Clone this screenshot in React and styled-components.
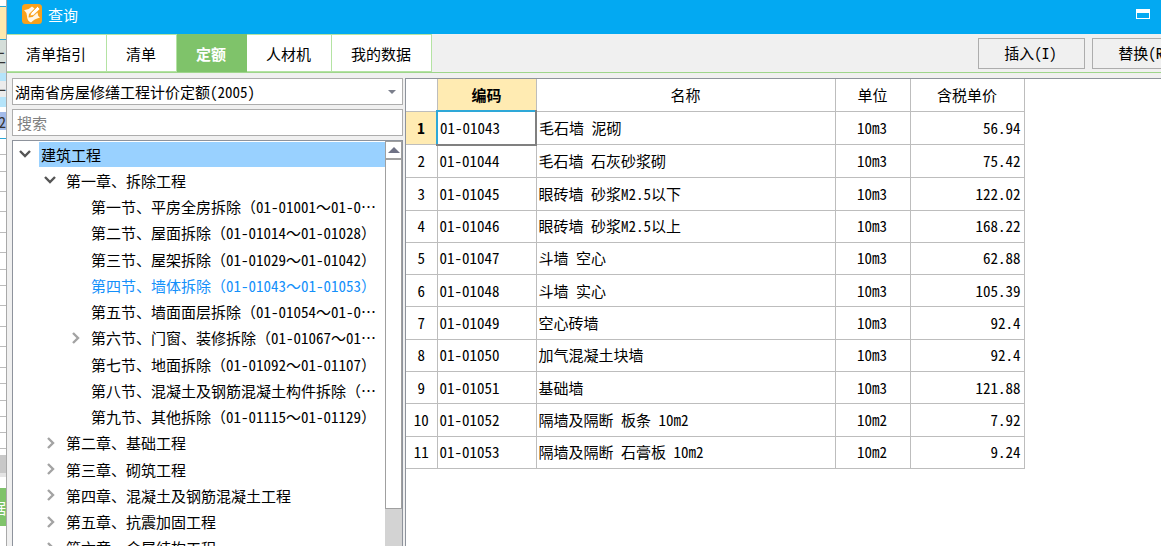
import React, { useState } from 'react';
import styled, { createGlobalStyle, css } from 'styled-components';

const TABS = ['清单指引', '清单', '定额', '人材机', '我的数据'];

const TREE = [
  { level: 0, label: '建筑工程', state: 'open' },
  { level: 1, label: '第一章、拆除工程', state: 'open' },
  { level: 2, label: '第一节、平房全房拆除（01-01001～01-01013）' },
  { level: 2, label: '第二节、屋面拆除（01-01014～01-01028）' },
  { level: 2, label: '第三节、屋架拆除（01-01029～01-01042）' },
  { level: 2, label: '第四节、墙体拆除（01-01043～01-01053）' },
  { level: 2, label: '第五节、墙面面层拆除（01-01054～01-01066）' },
  {
    level: 2,
    label: '第六节、门窗、装修拆除（01-01067～01-01091）',
    state: 'closed',
  },
  { level: 2, label: '第七节、地面拆除（01-01092～01-01107）' },
  {
    level: 2,
    label: '第八节、混凝土及钢筋混凝土构件拆除（01-01108～01-01114）',
  },
  { level: 2, label: '第九节、其他拆除（01-01115～01-01129）' },
  { level: 1, label: '第二章、基础工程', state: 'closed' },
  { level: 1, label: '第三章、砌筑工程', state: 'closed' },
  { level: 1, label: '第四章、混凝土及钢筋混凝土工程', state: 'closed' },
  { level: 1, label: '第五章、抗震加固工程', state: 'closed' },
  { level: 1, label: '第六章、金属结构工程', state: 'closed' },
];

const ITEMS = [
  ['01-01043', '毛石墙 泥砌', '10m3', '56.94'],
  ['01-01044', '毛石墙 石灰砂浆砌', '10m3', '75.42'],
  ['01-01045', '眼砖墙 砂浆M2.5以下', '10m3', '122.02'],
  ['01-01046', '眼砖墙 砂浆M2.5以上', '10m3', '168.22'],
  ['01-01047', '斗墙 空心', '10m3', '62.88'],
  ['01-01048', '斗墙 实心', '10m3', '105.39'],
  ['01-01049', '空心砖墙', '10m3', '92.4'],
  ['01-01050', '加气混凝土块墙', '10m3', '92.4'],
  ['01-01051', '基础墙', '10m3', '121.88'],
  ['01-01052', '隔墙及隔断 板条 10m2', '10m2', '7.92'],
  ['01-01053', '隔墙及隔断 石膏板 10m2', '10m2', '9.24'],
];

// strips of the main window that stay visible behind the dialog
const BACK_STRIPS = [
  { height: 7, color: '#ffffff', line: '#2aa7d8' },
  { height: 33, color: '#ffe9ae', line: '#2aa7d8' },
  { height: 33, color: '#d5ded9', text: '二' },
  { height: 8, color: '#b5e4fa' },
  { height: 16, color: '#ececec', text: '一' },
  { height: 10, color: '#b5e4fa' },
  { height: 5, color: '#ffffff' },
  { height: 18, color: '#a3bbea', text: '2' },
  { height: 9, color: '#ffffff', line: '#2aa7d8' },
  ...[16, 17, 20, 20, 21, 20, 17, 16, 20, 21, 20, 21, 16, 17, 16, 16, 16].map(
    (height) => ({ height, color: '#ffffff', line: '#bcbcbc' }),
  ),
  { height: 6, color: '#ffffff' },
  { height: 18, color: '#c8c8c8' },
  { height: 4, color: '#e4e4e4' },
  { height: 11, color: '#ffffff' },
  { height: 38, color: '#7fc36a', text: '据', textColor: '#ffffff' },
];

function Chevron({ open }) {
  return (
    <svg width="12" height="12" viewBox="0 0 12 12" fill="none">
      {open ? (
        <path d="M1 3 L6 8 L11 3" stroke="#555" strokeWidth="2.4" />
      ) : (
        <path d="M4 1 L9 6 L4 11" stroke="#a3a3a3" strokeWidth="2.4" />
      )}
    </svg>
  );
}

function Logo() {
  return (
    <svg width="20" height="20" viewBox="0 0 20 20">
      <rect width="20" height="20" rx="3.5" fill="#f9a11b" />
      <path
        d="M2 6 Q6 6.500 10 2.500 L12.500 4.500 L7 10 L6.500 13.500 L10.500 13 L15.500 8.500 Q15.500 12 18 13.500 Q12 15 9 18.500 Q5 17 5 12 Q4.500 8 2 6 Z"
        fill="#fff6e6"
      />
      <path
        d="M8 12 L9 9 L15.500 2.500 L18 5 L11.500 11.200 Z"
        fill="#ffffff"
        stroke="#f9a11b"
        strokeWidth="0.7"
      />
    </svg>
  );
}

// brackets and range marks keep the full character width
function NodeText({ text }) {
  return text
    .split(/([（～）])/)
    .map((part, i) => (i % 2 ? <Wide key={i}>{part}</Wide> : part));
}

export default function App() {
  const [tab, setTab] = useState('定额');
  const [section, setSection] = useState(5);
  const [selected, setSelected] = useState(0);

  return (
    <Screen lang="zh-CN">
      <GlobalStyle />
      <Backdrop aria-hidden="true">
        {BACK_STRIPS.map((strip, i) => (
          <Strip
            key={i}
            $height={strip.height}
            $color={strip.color}
            $line={strip.line}
            $textColor={strip.textColor}
          >
            {strip.text}
          </Strip>
        ))}
      </Backdrop>
      <Dialog>
        <TitleBar>
          <Logo />
          <Title>查询</Title>
          <WindowButton aria-label="最大化">
            <svg width="14" height="10" viewBox="0 0 14 10">
              <path
                d="M0 0 H14 V10 H0 Z M1 4 V9 H13 V4 Z"
                fill="#ffffff"
                fillRule="evenodd"
              />
            </svg>
          </WindowButton>
        </TitleBar>
        <Toolbar>
          {TABS.map((name) => (
            <Tab key={name} $active={name === tab} onClick={() => setTab(name)}>
              {name}
            </Tab>
          ))}
          <Actions>
            <ActionButton>插入(I)</ActionButton>
            <ActionButton>替换(R)</ActionButton>
          </Actions>
        </Toolbar>
        <Content>
          <SidePanel>
            <SelectBox>
              <Select aria-label="定额库">
                <option>湖南省房屋修缮工程计价定额(2005)</option>
              </Select>
              <svg width="8" height="4" viewBox="0 0 8 4">
                <path d="M0 0 H8 L4 4 Z" fill="#7b7f8c" />
              </svg>
            </SelectBox>
            <Search aria-label="搜索" placeholder="搜索" />
            <TreeBox>
              <Tree>
                {TREE.map((node, i) => (
                  <TreeRow key={node.label} $level={node.level}>
                    <Toggle>
                      {node.state && <Chevron open={node.state === 'open'} />}
                    </Toggle>
                    <NodeLabel
                      $root={node.level === 0}
                      $current={i === section}
                      onClick={() => setSection(i)}
                    >
                      <NodeText text={node.label} />
                    </NodeLabel>
                  </TreeRow>
                ))}
              </Tree>
              <ScrollTrack>
                <ScrollButton aria-label="向上滚动">
                  <svg width="12" height="6" viewBox="0 0 12 6">
                    <path d="M0 6 L6 0 L12 6 Z" fill="#6f7285" />
                  </svg>
                </ScrollButton>
                <ScrollThumb />
              </ScrollTrack>
            </TreeBox>
          </SidePanel>
          <TablePanel>
            <Table>
              <colgroup>
                <Col $width={31} />
                <Col $width={99} />
                <Col $width={299} />
                <Col $width={75} />
                <Col $width={114} />
              </colgroup>
              <thead>
                <HeadRow>
                  <HeadCell aria-label="序号" />
                  <HeadCell scope="col" $active>
                    编码
                  </HeadCell>
                  <HeadCell scope="col">名称</HeadCell>
                  <HeadCell scope="col">单位</HeadCell>
                  <HeadCell scope="col">含税单价</HeadCell>
                </HeadRow>
              </thead>
              <tbody>
                {ITEMS.map(([code, name, unit, price], i) => (
                  <tr key={code} onClick={() => setSelected(i)}>
                    <HeadCell scope="row" $active={i === selected}>
                      {i + 1}
                    </HeadCell>
                    <Cell $selected={i === selected}>{code}</Cell>
                    <Cell>{name}</Cell>
                    <Cell $align="center">{unit}</Cell>
                    <Cell $align="right">{price}</Cell>
                  </tr>
                ))}
              </tbody>
            </Table>
          </TablePanel>
        </Content>
      </Dialog>
    </Screen>
  );
}

const GlobalStyle = createGlobalStyle`
  * {
    box-sizing: border-box;
  }

  body {
    margin: 0;
    background-color: #ffffff;
  }

  body, button, input, select {
    font-family: 'Noto Sans CJK SC', 'Liberation Sans', sans-serif;
    font-size: 15px;
    font-feature-settings: 'hwid';
    color: #000000;
  }
`;

const Screen = styled.div`
  display: flex;
  height: 100vh;
  overflow: hidden;
`;

const Backdrop = styled.div`
  flex: none;
  width: 7px;
  overflow: hidden;
  border-right: 1px solid #a9a9a9;
`;

const Strip = styled.div`
  display: flex;
  align-items: center;
  justify-content: flex-end;
  height: ${({ $height }) => $height}px;
  overflow: hidden;
  background-color: ${({ $color }) => $color};
  border-bottom: ${({ $line }) => ($line ? `1px solid ${$line}` : 'none')};
  color: ${({ $textColor }) => $textColor || '#333333'};
`;

const Dialog = styled.main`
  display: flex;
  flex: 1;
  flex-direction: column;
  min-width: 0;
  background-color: #f0f0f0;
`;

const TitleBar = styled.header`
  display: flex;
  flex: none;
  align-items: center;
  height: 34px;
  padding: 0 11px 6px 15px;
  background-color: #03a9f2;
`;

const Title = styled.h1`
  margin: 0 auto 0 6px;
  font-size: 15px;
  font-weight: normal;
  color: #ffffff;
`;

const WindowButton = styled.button`
  display: flex;
  padding: 0;
  border: none;
  background: none;
`;

const Toolbar = styled.nav`
  display: flex;
  flex: none;
  height: 39px;
  overflow: hidden;
  border-bottom: 1px solid #9ed58b;
`;

const Tab = styled.button`
  padding: 0 20px 0 19px;
  border: 1px solid #b4e3a3;
  border-left: none;
  background-color: #ffffff;

  ${({ $active }) =>
    $active &&
    css`
      border-color: #7fc36a;
      background-color: #7fc36a;
      font-weight: bold;
      color: #ffffff;
    `}
`;

const Actions = styled.div`
  display: flex;
  gap: 7px;
  margin: 4px -38px 3px auto;
`;

const ActionButton = styled.button`
  width: 107px;
  padding: 0 4px 2px 2px;
  border: 1px solid #adadad;
  background-color: #f0f0f0;
`;

const Content = styled.div`
  display: flex;
  flex: 1;
  gap: 2px;
  min-height: 0;
  padding: 5px 0 0 5px;
`;

const SidePanel = styled.aside`
  display: flex;
  flex: none;
  flex-direction: column;
  gap: 4px;
  width: 391px;
`;

const SelectBox = styled.div`
  display: flex;
  flex: none;
  align-items: center;
  height: 27px;
  padding-right: 6px;
  border: 1px solid #adadad;
  background-color: #ffffff;
`;

const Select = styled.select`
  flex: 1;
  padding: 0 2px;
  border: none;
  appearance: none;
  background: none;
`;

const Search = styled.input`
  flex: none;
  height: 27px;
  padding: 0 4px;
  border: 1px solid #adadad;
  background-color: #ffffff;

  &::placeholder {
    color: #808080;
  }
`;

const TreeBox = styled.div`
  display: flex;
  flex: 1;
  min-height: 0;
  border: 1px solid #8e939c;
  border-bottom: none;
  background-color: #ffffff;
`;

const Tree = styled.ul`
  display: grid;
  flex: 1;
  grid-template-rows: repeat(16, 1fr);
  height: 420px;
  min-width: 0;
  margin: 0;
  padding: 0;
  list-style: none;
`;

const TreeRow = styled.li`
  display: flex;
  align-items: center;
  min-width: 0;
  min-height: 0;
  padding-left: ${({ $level }) => $level * 25 + 6}px;
`;

const Toggle = styled.span`
  display: flex;
  flex: none;
  width: 20px;
`;

const NodeLabel = styled.span`
  flex: 1;
  padding: 0 5px 0 2px;
  overflow: hidden;
  line-height: 25px;
  text-overflow: ellipsis;
  white-space: nowrap;
  background-color: ${({ $root }) => ($root ? '#99d1ff' : 'transparent')};
  color: ${({ $current }) => ($current ? '#1490fa' : '#000000')};
`;

const Wide = styled.span`
  font-feature-settings: normal;
`;

const ScrollTrack = styled.div`
  display: flex;
  flex: none;
  flex-direction: column;
  width: 17px;
  background-color: #d3d3d3;
`;

const ScrollButton = styled.button`
  display: flex;
  flex: none;
  align-items: center;
  justify-content: center;
  height: 18px;
  padding: 0;
  border: 1px solid #a0a0a0;
  background-color: #ffffff;
`;

const ScrollThumb = styled.div`
  height: 350px;
  border: 1px solid #a0a0a0;
  background-color: #ffffff;
`;

const TablePanel = styled.section`
  flex: 1;
  min-width: 0;
  border-top: 1px solid #8e939c;
  border-left: 1px solid #8e939c;
  background-color: #ffffff;
`;

const Table = styled.table`
  width: 618px;
  height: 390px;
  table-layout: fixed;
  border-collapse: collapse;
  border-top: hidden;
  border-left: hidden;
  line-height: 22px;
`;

const Col = styled.col`
  width: ${({ $width }) => $width}px;
`;

const HeadRow = styled.tr`
  height: 32px;
`;

const HeadCell = styled.th`
  padding: 0;
  border: 1px solid #bdbdbd;
  font-weight: ${({ $active }) => ($active ? 'bold' : 'normal')};
  background-color: ${({ $active }) => ($active ? '#ffebb2' : '#ffffff')};
`;

const Cell = styled.td`
  padding: 0 3px 0 2px;
  border: 1px solid #bdbdbd;
  text-align: ${({ $align }) => $align || 'left'};
  white-space: nowrap;

  ${({ $selected }) =>
    $selected &&
    css`
      border: 2px solid #808080;
      border-top-color: #2ea8d8;
      border-left-color: #2ea8d8;
    `}
`;
